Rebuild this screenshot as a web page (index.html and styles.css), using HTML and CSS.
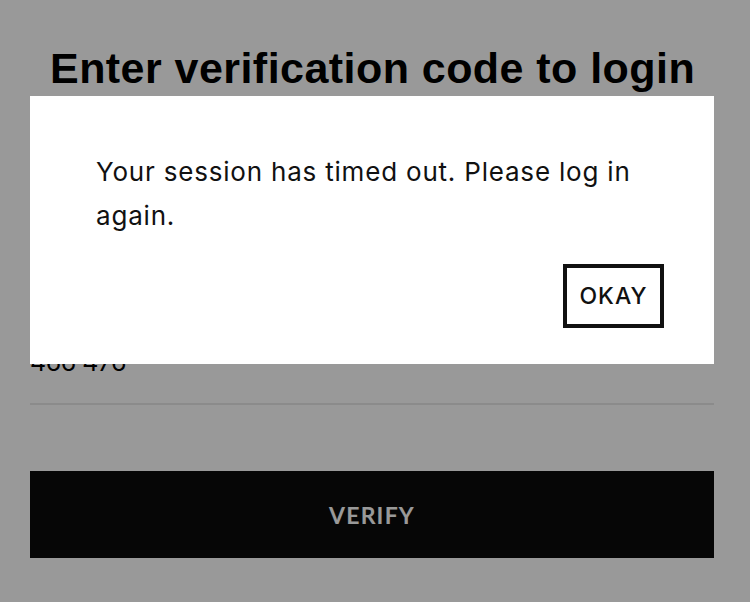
FILE: index.html
```html
<!DOCTYPE html>
<html>
<head>
<meta charset="utf-8">
<link rel="stylesheet" href="styles.css">
</head>
<body>
<main class="page">
  <h1 class="title">Enter verification code to login</h1>
  <div class="field">
    <div class="field-value">466 476</div>
  </div>
  <button class="verify">VERIFY</button>
</main>
<div class="overlay">
  <div class="modal">
    <p class="modal-text">Your session has timed out. Please log in again.</p>
    <div class="modal-actions">
      <button class="okay">OKAY</button>
    </div>
  </div>
</div>
</body>
</html>
```

FILE: styles.css
```css
html, body {
  margin: 0;
  padding: 0;
  background: #fff;
  width: 750px;
  height: 602px;
  overflow: hidden;
}
.page {
  padding: 0 36px 0 30px;
  display: flex;
  flex-direction: column;
  font-family: Inter, "Liberation Sans", sans-serif;
  color: #000;
}
.title {
  margin: 42px 0 0 20px;
  font-family: "Liberation Sans", sans-serif;
  font-weight: 700;
  font-size: 43px;
  line-height: 52px;
  letter-spacing: 0.45px;
  white-space: nowrap;
}
.field {
  margin-top: 252px;
  border-bottom: 2px solid #e8e8e8;
  padding: 0 0 25px;
}
.field-value {
  font-size: 25px;
  line-height: 32px;
  letter-spacing: -0.5px;
}
.verify {
  margin-top: 66px;
  height: 87px;
  background: #0b0b0b;
  color: #fff;
  border: 0;
  font-family: Lato, "Liberation Sans", sans-serif;
  font-weight: 700;
  font-size: 23px;
  letter-spacing: 1.2px;
}
.overlay {
  position: fixed;
  inset: 0;
  background: rgba(0, 0, 0, 0.4);
}
.modal {
  position: absolute;
  left: 30px;
  top: 96px;
  width: 684px;
  height: 268px;
  background: #fff;
  box-sizing: border-box;
  padding: 54px 50px 0 66px;
  font-family: Inter, "Liberation Sans", sans-serif;
  color: #111;
}
.modal-text {
  margin: 0;
  font-size: 26px;
  line-height: 44px;
  letter-spacing: 0.8px;
}
.modal-actions {
  display: flex;
  justify-content: flex-end;
  margin-top: 26px;
}
.okay {
  width: 101px;
  height: 64px;
  border: 4px solid #111;
  background: #fff;
  font-family: Inter, "Liberation Sans", sans-serif;
  font-weight: 500;
  font-size: 23px;
  letter-spacing: 1px;
  color: #111;
  padding: 0;
}
```
